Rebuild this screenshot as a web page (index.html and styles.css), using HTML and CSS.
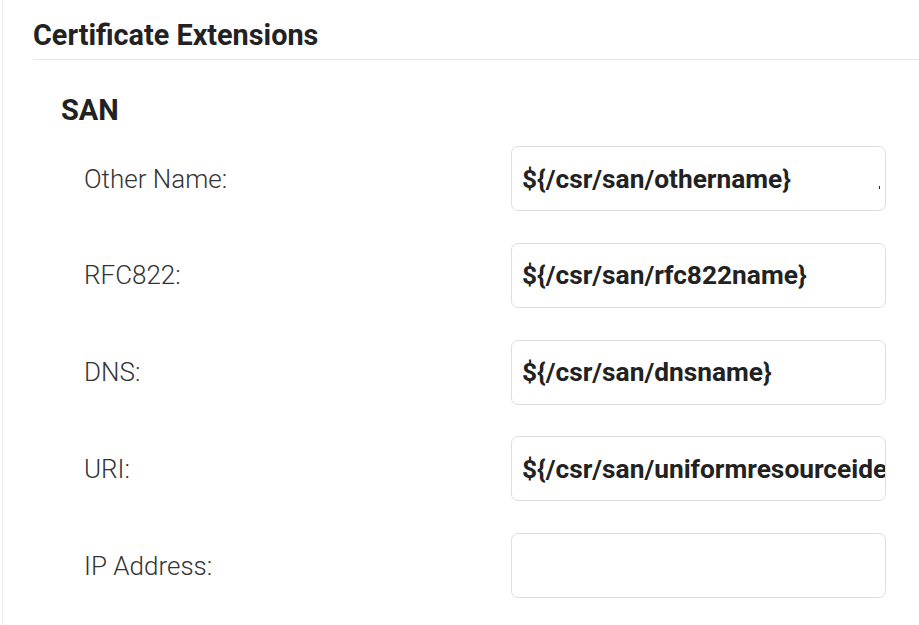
FILE: index.html
```html
<!DOCTYPE html>
<html>
<head>
<meta charset="utf-8">
<link rel="stylesheet" href="styles.css">
</head>
<body>
<div class="panel">
  <h2 class="section-title">Certificate Extensions</h2>
  <div class="group">
    <h3 class="group-title">SAN</h3>
    <div class="rows">
      <div class="row">
        <label class="label">Other Name:</label>
        <div class="field"><span class="value">${/csr/san/othername}</span><span class="tick"></span></div>
      </div>
      <div class="row">
        <label class="label">RFC822:</label>
        <div class="field"><span class="value">${/csr/san/rfc822name}</span></div>
      </div>
      <div class="row">
        <label class="label">DNS:</label>
        <div class="field"><span class="value">${/csr/san/dnsname}</span></div>
      </div>
      <div class="row">
        <label class="label">URI:</label>
        <div class="field"><span class="value">${/csr/san/uniformresourceidentifier}</span></div>
      </div>
      <div class="row">
        <label class="label">IP Address:</label>
        <div class="field"></div>
      </div>
    </div>
  </div>
</div>
</body>
</html>
```

FILE: styles.css
```css
html, body {
  margin: 0;
  padding: 0;
  background: #fff;
}
body {
  font-family: Roboto, "Liberation Sans", sans-serif;
  color: #222;
  width: 919px;
  height: 625px;
  overflow: hidden;
}
.panel {
  margin-left: 2px;
  border-left: 1px solid #ececec;
  height: 625px;
  padding-left: 30px;
}
.section-title {
  margin: 0;
  padding-top: 17px;
  height: 42px;
  box-sizing: content-box;
  font-size: 28.8px;
  font-weight: 700;
  line-height: 36px;
  border-bottom: 1px solid #e6e6e6;
}
.group {
  padding-left: 28px;
}
.group-title {
  margin: 0;
  padding-top: 32px;
  font-size: 29px;
  font-weight: 700;
  line-height: 36px;
}
.rows {
  display: flex;
  flex-direction: column;
  gap: 31.75px;
  margin-top: 18px;
}
.row {
  display: flex;
  align-items: center;
  height: 65px;
}
.label {
  width: 427px;
  padding-left: 23px;
  font-size: 26px;
  font-weight: 300;
  color: #333;
}
.field {
  position: relative;
  width: 361px;
  height: 63px;
  border: 1px solid #dedede;
  border-radius: 7px;
  display: flex;
  align-items: center;
  padding-left: 10px;
  padding-right: 2px;
  box-sizing: content-box;
  overflow: hidden;
  white-space: nowrap;
}
.value {
  font-size: 26.3px;
  font-weight: 700;
  color: #222;
}
.tick {
  position: absolute;
  right: 5px;
  top: 39px;
  width: 1px;
  height: 3px;
  background: #223;
}
```
